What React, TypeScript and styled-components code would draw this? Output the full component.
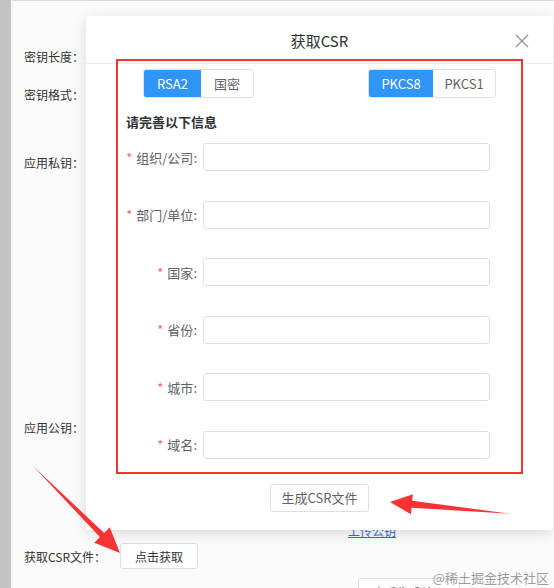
import React from "react";
import styled, { createGlobalStyle } from "styled-components";

const GlobalStyle = createGlobalStyle`
  html, body {
    margin: 0;
    padding: 0;
    width: 554px;
    height: 588px;
    overflow: hidden;
    font-family: "Noto Sans CJK SC", "Noto Sans", sans-serif;
    background: #fbfbfb;
  }
`;

const Screen = styled.div`
  position: relative;
  width: 554px;
  height: 588px;
  overflow: hidden;
  display: flex;
  background: #fbfbfb;
`;

const SideStrip = styled.div`
  width: 11px;
  flex-shrink: 0;
  background: #c2c2c2;
  border-right: 2px solid #f4f4f4;
`;

const Main = styled.div`
  flex: 1;
  display: flex;
  flex-direction: column;
`;

const TopBar = styled.div`
  height: 6px;
  background: #ebebeb;
  border-bottom: 1px solid #d9d9d9;
`;

const PageForm = styled.div`
  display: flex;
  flex-direction: column;
  padding-left: 11px;
`;

const PageRow = styled.div<{ $top: number }>`
  display: flex;
  align-items: center;
  height: 26px;
  margin-top: ${({ $top }) => $top}px;
  font-size: 12px;
  color: #333;
`;

const PageLabel = styled.span`
  width: 96px;
`;

const PageButton = styled.button<{ $w: number; $h: number }>`
  width: ${({ $w }) => $w}px;
  height: ${({ $h }) => $h}px;
  background: #fff;
  border: 1px solid #dcdfe6;
  border-radius: 3px;
  font-family: inherit;
  font-size: 12px;
  color: #333;
  padding: 0;
`;

const UploadLink = styled.a`
  margin-left: 324px;
  height: 20px;
  line-height: 20px;
  margin-top: 81px;
  font-size: 12px;
  color: #2a6fd6;
  text-decoration: underline;
`;

const Modal = styled.div`
  position: absolute;
  left: 86px;
  top: 16px;
  width: 467px;
  height: 514px;
  background: #fff;
  border-radius: 3px;
  box-shadow: 0 3px 14px rgba(0, 0, 0, 0.14);
  display: flex;
  flex-direction: column;
`;

const ModalHeader = styled.div`
  position: relative;
  height: 48px;
  border-bottom: 1px solid #ebebeb;
  display: flex;
  align-items: center;
  justify-content: center;
  padding-top: 2px;
  box-sizing: border-box;
`;

const ModalTitle = styled.span`
  font-size: 15px;
  color: #303133;
`;

const CloseButton = styled.button`
  position: absolute;
  right: 24px;
  top: 18px;
  width: 14px;
  height: 14px;
  padding: 0;
  border: none;
  background: none;
  display: flex;
`;

const ModalBody = styled.div`
  display: flex;
  flex-direction: column;
  padding: 5px 57px 0 40px;
`;

const ToggleBar = styled.div`
  display: flex;
  justify-content: space-between;
  padding-left: 17px;
`;

const ToggleGroup = styled.div`
  display: flex;
  height: 29px;
  border: 1px solid #dcdfe6;
  border-radius: 3px;
  overflow: hidden;
  box-sizing: border-box;
`;

const ToggleItem = styled.div<{ $active?: boolean; $w: number }>`
  width: ${({ $w }) => $w}px;
  display: flex;
  align-items: center;
  justify-content: center;
  font-size: 13px;
  background: ${({ $active }) => ($active ? "#2f95f7" : "#fff")};
  color: ${({ $active }) => ($active ? "#fff" : "#606266")};
`;

const SectionTitle = styled.div`
  margin-top: 14px;
  height: 20px;
  line-height: 20px;
  font-size: 13px;
  font-weight: bold;
  color: #303133;
`;

const Form = styled.div`
  display: flex;
  flex-direction: column;
  gap: 29.5px;
  margin-top: 11px;
`;

const FieldRow = styled.div`
  display: flex;
  align-items: center;
  height: 28px;
`;

const FieldLabel = styled.label`
  width: 77px;
  padding-right: 6px;
  box-sizing: border-box;
  text-align: right;
  font-size: 13px;
  color: #606266;
  white-space: nowrap;
`;

const Star = styled.span`
  color: #f56c6c;
  margin-right: 4px;
`;

const TextInput = styled.input`
  width: 287px;
  height: 28px;
  box-sizing: border-box;
  border: 1px solid #dcdfe6;
  border-radius: 3px;
  background: #fff;
  outline: none;
`;

const ModalFooter = styled.div`
  display: flex;
  justify-content: center;
  margin-top: 25px;
`;

const GenerateButton = styled.button`
  width: 99px;
  height: 28px;
  background: #fff;
  border: 1px solid #dcdfe6;
  border-radius: 3px;
  font-family: inherit;
  font-size: 13px;
  color: #606266;
  padding: 0;
`;

// screenshot annotations drawn over the page
const RedFrame = styled.div`
  position: absolute;
  left: 116px;
  top: 59px;
  width: 407px;
  height: 415px;
  border: 2px solid #f73030;
  box-sizing: border-box;
  pointer-events: none;
`;

const Arrows = styled.svg`
  position: absolute;
  left: 0;
  top: 0;
  pointer-events: none;
`;

const Watermark = styled.div`
  position: absolute;
  right: 5px;
  top: 568px;
  font-size: 13px;
  color: #9c9c9c;
  text-shadow: 0 0 2px #fff;
`;

const Spacer = styled.span<{ $w: number }>`
  width: ${({ $w }) => $w}px;
`;

const fields = ["组织/公司", "部门/单位", "国家", "省份", "城市", "域名"];

export default function App() {
  return (
    <>
      <GlobalStyle />
      <Screen>
        <SideStrip />
        <Main>
          <TopBar />
          <PageForm>
            <PageRow $top={42}>
              <PageLabel>密钥长度：</PageLabel>
            </PageRow>
            <PageRow $top={12}>
              <PageLabel>密钥格式：</PageLabel>
            </PageRow>
            <PageRow $top={42}>
              <PageLabel>应用私钥：</PageLabel>
            </PageRow>
            <PageRow $top={239}>
              <PageLabel>应用公钥：</PageLabel>
            </PageRow>
            <UploadLink>上传公钥</UploadLink>
            <PageRow $top={2}>
              <PageLabel>获取CSR文件：</PageLabel>
              <PageButton $w={78} $h={26}>点击获取</PageButton>
            </PageRow>
            <PageRow $top={10}>
              <PageLabel />
              <Spacer $w={238} />
              <PageButton $w={102} $h={28}>查看生成结果</PageButton>
            </PageRow>
          </PageForm>
        </Main>

        <Modal>
          <ModalHeader>
            <ModalTitle>获取CSR</ModalTitle>
            <CloseButton aria-label="关闭">
              <svg width="14" height="14" viewBox="0 0 14 14">
                <path d="M1 1L13 13M13 1L1 13" stroke="#909399" strokeWidth="1.3" />
              </svg>
            </CloseButton>
          </ModalHeader>
          <ModalBody>
            <ToggleBar>
              <ToggleGroup>
                <ToggleItem $active $w={57}>RSA2</ToggleItem>
                <ToggleItem $w={52}>国密</ToggleItem>
              </ToggleGroup>
              <ToggleGroup>
                <ToggleItem $active $w={64}>PKCS8</ToggleItem>
                <ToggleItem $w={62}>PKCS1</ToggleItem>
              </ToggleGroup>
            </ToggleBar>
            <SectionTitle>请完善以下信息</SectionTitle>
            <Form>
              {fields.map((f) => (
                <FieldRow key={f}>
                  <FieldLabel>
                    <Star>*</Star>
                    {f}:
                  </FieldLabel>
                  <TextInput />
                </FieldRow>
              ))}
            </Form>
          </ModalBody>
          <ModalFooter>
            <GenerateButton>生成CSR文件</GenerateButton>
          </ModalFooter>
        </Modal>

        <RedFrame />
        <Arrows width="554" height="588" viewBox="0 0 554 588">
          <polygon
            points="33,466 104.1,532.9 109.7,527.2 120,553 94.3,542.8 99.9,537.1"
            fill="#f73333"
          />
          <polygon
            points="512,514 412.2,500.7 412.9,494.2 390,502 410.9,514.2 411.6,507.7"
            fill="#f73333"
          />
        </Arrows>
        <Watermark>@稀土掘金技术社区</Watermark>
      </Screen>
    </>
  );
}
